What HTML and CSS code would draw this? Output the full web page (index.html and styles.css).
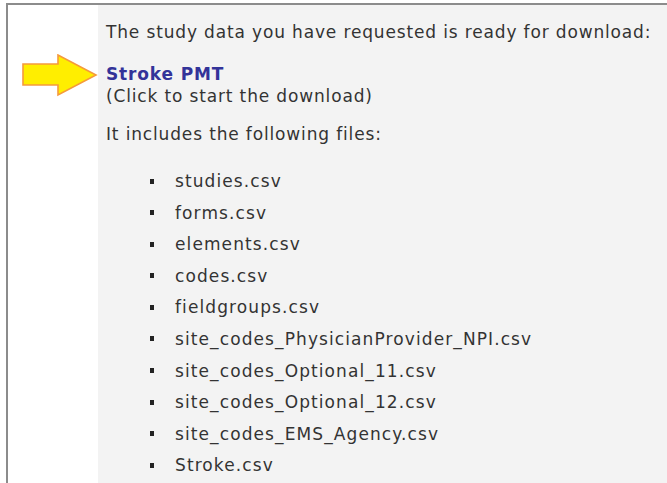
FILE: index.html
```html
<!DOCTYPE html>
<html lang="en">
<head>
<meta charset="utf-8">
<title>Study data download</title>
<link rel="stylesheet" href="styles.css">
</head>
<body>
<div class="frame">
  <div class="gutter">
    <svg class="pointer" width="76" height="44" viewBox="0 0 76 44" aria-hidden="true">
      <polygon points="1,10 36,10 36,1 74,21 36,41 36,31 1,31" fill="#ffee00" stroke="#f59a3c" stroke-width="1.6" stroke-linejoin="miter"/>
    </svg>
  </div>
  <div class="panel">
    <p class="intro">The study data you have requested is ready for download:</p>
    <p class="download"><a class="link" href="#">Stroke PMT</a><br>(Click to start the download)</p>
    <p class="intro">It includes the following files:</p>
    <ul class="files">
      <li>studies.csv</li>
      <li>forms.csv</li>
      <li>elements.csv</li>
      <li>codes.csv</li>
      <li>fieldgroups.csv</li>
      <li>site_codes_PhysicianProvider_NPI.csv</li>
      <li>site_codes_Optional_11.csv</li>
      <li>site_codes_Optional_12.csv</li>
      <li>site_codes_EMS_Agency.csv</li>
      <li>Stroke.csv</li>
    </ul>
  </div>
</div>
</body>
</html>
```

FILE: styles.css
```css
html, body {
  margin: 0;
  padding: 0;
  background: #ffffff;
}

body {
  font-family: "DejaVu Sans", Verdana, sans-serif;
  font-size: 17px;
  letter-spacing: 0.85px;
  color: #333333;
  overflow: hidden;
}

.frame {
  display: flex;
  margin: 3px 0 0 6px;
  border-top: 2px solid #8c8c8c;
  border-left: 2px solid #8c8c8c;
  height: 478px;
}

.gutter {
  width: 90px;
  flex: none;
  background: #ffffff;
}

.pointer {
  display: block;
  margin: 49px 0 0 14px;
}

.panel {
  flex: 1;
  background: #f3f3f3;
  padding: 16px 0 0 8px;
  white-space: nowrap;
}

.panel p {
  margin: 0;
  line-height: 22px;
}

.panel .download {
  margin: 20px 0 16px;
}

.link {
  color: #333399;
  font-weight: bold;
  text-decoration: none;
  letter-spacing: 0.85px;
}

.files {
  list-style: none;
  margin: 25px 0 0;
  padding: 0 0 0 44px;
  letter-spacing: 1.1px;
}

.files li {
  display: flex;
  align-items: center;
  line-height: 22px;
  margin-bottom: 9.6px;
}

.files li::before {
  content: "";
  width: 4px;
  height: 5px;
  margin-right: 21px;
  background: #222222;
}
```
